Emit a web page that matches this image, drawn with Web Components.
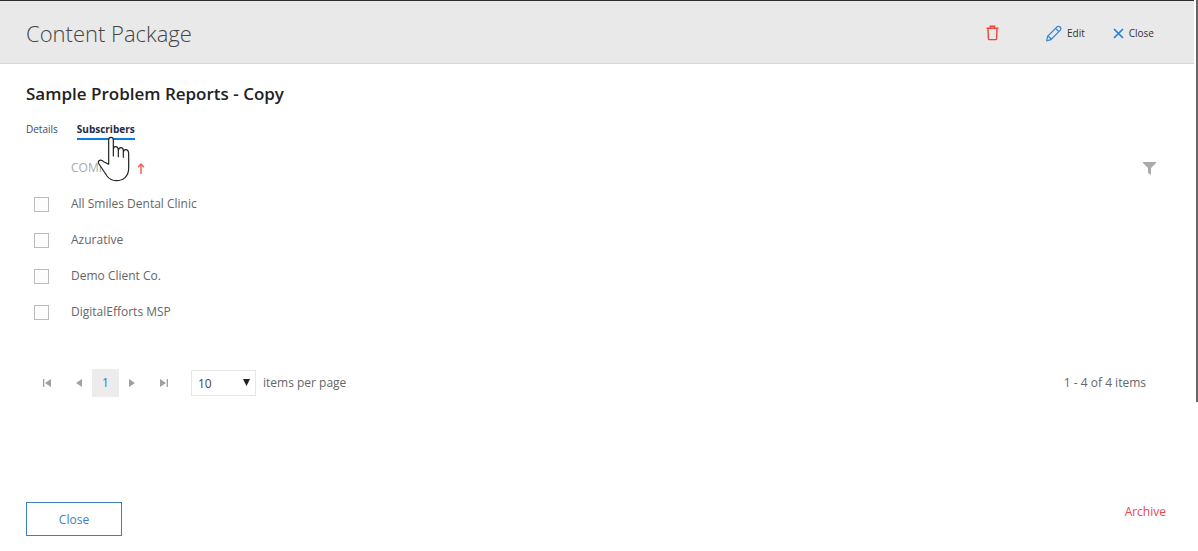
<!DOCTYPE html>
<html lang="en">
<head>
<meta charset="utf-8">
<title>Content Package</title>
<style>
body { margin: 0; background: #fff; color: #666; font: 12px/20px "Open Sans", "Noto Sans", sans-serif; }
</style>
</head>
<body>
<package-page></package-page>
<script>
function define(name, html, setup) {
  const template = document.createElement("template");
  template.innerHTML = html;
  customElements.define(name, class extends HTMLElement {
    constructor() {
      super();
      this.attachShadow({ mode: "open" }).append(template.content.cloneNode(true));
    }
    connectedCallback() { if (setup) setup(this, this.shadowRoot); }
  });
}

define("tool-button", `
<style>
:host { display: block; }
button { display: flex; align-items: center; gap: 5px; padding: 0; border: 0; background: none; color: #333; font: inherit; font-size: 10px; line-height: 20px; cursor: pointer; }
</style>
<button type="button"><slot name="icon"></slot><slot></slot></button>`,
(host, root) => {
  if (host.hasAttribute("label")) root.querySelector("button").setAttribute("aria-label", host.getAttribute("label"));
});

define("page-header", `
<style>
:host { display: block; border-top: 1px solid #2e2a2e; border-bottom: 1px solid #d6d6d6; background: #e9e9e9; margin-right: 2px; }
header { display: flex; align-items: center; height: 62px; padding: 2px 40px 0 26px; box-sizing: border-box; }
h1 { flex: 1; margin: 0; font-size: 22px; line-height: 32px; font-weight: 300; color: #444; }
nav { display: flex; align-items: center; }
.remove { margin-right: 47px; }
.edit { margin-right: 28px; }
svg { display: block; fill: none; }
</style>
<header>
  <h1>Content Package</h1>
  <nav aria-label="Package actions">
    <tool-button class="remove" label="Delete"><svg slot="icon" width="13" height="16" viewBox="0 0 13 16" stroke="#f0443c" stroke-width="1.4"><path d="M.5 3.3h12M4.3 3V1.2h4.4V3M2 3.500l.4 10.3q0 .8.8.8h6.600q.8 0 .8-.8L11 3.500"/></svg></tool-button>
    <tool-button class="edit"><svg slot="icon" width="16" height="17" viewBox="0 0 16 17" stroke="#3585d0" stroke-width="1.2"><path d="M.7 15.8l.9-4.500L11.2 1.8q1.4-1.1 2.9.2 1.500 1.600.2 3.1L4.9 14.600zM1.600 11.3q2.8.4 3.3 3.3M9.600 3.4l3.4 3.3"/></svg>Edit</tool-button>
    <tool-button><svg slot="icon" width="11" height="11" viewBox="0 0 11 11" stroke="#2880d5" stroke-width="1.7"><path d="M1 1l9 9M10 1l-9 9"/></svg>Close</tool-button>
  </nav>
</header>`);

define("tab-bar", `
<style>
:host { display: block; }
nav { display: flex; gap: 19px; position: relative; }
a { color: #3f4668; text-decoration: none; font-size: 10px; line-height: 20px; height: 19px; border-bottom: 2px solid transparent; }
a[aria-current] { color: #222b45; font-weight: 700; border-color: #0a7be0; }
.pointer { position: absolute; left: 70px; top: 16px; pointer-events: none; }
</style>
<nav>
  <a href="#details">Details</a>
  <a href="#subscribers" aria-current="page">Subscribers</a>
  <svg class="pointer" width="37" height="47" viewBox="285 75 111 141" fill="#fff" stroke="#222" stroke-width="3.6" stroke-linecap="round" stroke-linejoin="round" aria-hidden="true"><path d="M323 163V90q0-8 7-8t7 8v48V119q0-9 7-9t8 9v21-18q1-9 8-9t7 9v20-15q1-8 7-8 8 0 9 11v45q0 18-11 28-10 9-26 9-17 0-28-14L294 162q-5-8 2-11 6-2 12 4z"/></svg>
</nav>`);

define("subscriber-table", `
<style>
:host { display: block; }
table { width: 100%; border-collapse: collapse; table-layout: fixed; }
th, td { padding: 0; height: 36px; text-align: left; font-weight: 400; vertical-align: middle; }
.pick { width: 45px; }
.tools { width: 53px; }
th { color: #aaa; }
th svg, th button { display: block; }
.sort { display: flex; align-items: center; gap: 8px; }
button { border: 0; padding: 0; background: none; }
input { appearance: none; display: block; width: 15px; height: 15px; margin: 0 0 0 8px; border: 1px solid #bbb; background: #fdfdfd; }
</style>
<table>
  <thead><tr>
    <th class="pick"></th>
    <th scope="col" aria-sort="ascending"><span class="sort">COMPANY <svg width="8" height="11" viewBox="0 0 8 11" fill="none" stroke="#f4605c" stroke-width="1.5"><path d="M4 11V1M1 4.2L4 1l3 3.2"/></svg></span></th>
    <th class="tools"><button type="button" aria-label="Filter"><svg width="13" height="13" viewBox="0 0 13 13" fill="#aaa"><path d="M0 0h13v1L8 6v7l-3-2V6L0 1z"/></svg></button></th>
  </tr></thead>
  <tbody></tbody>
</table>`,
(host, root) => {
  const body = root.querySelector("tbody");
  body.replaceChildren();
  host.getAttribute("names").split("|").forEach((name, i) => {
    const row = body.insertRow();
    row.innerHTML = `<td><input type="checkbox" id="pick${i}"></td><td colspan="2"><label for="pick${i}"></label></td>`;
    row.querySelector("label").textContent = name;
  });
});

define("list-pager", `
<style>
:host { display: flex; align-items: center; height: 28px; padding-left: 8px; }
button { flex: none; width: 26px; height: 28px; padding: 0; border: 0; background: none; color: #aaa; font: inherit; display: grid; place-items: center; }
.gap { margin-right: 6px; }
.current { width: 27px; background: #ececec; color: #2b78c2; }
.picker { position: relative; margin: 0 7px 0 14px; }
select { display: block; appearance: none; width: 65px; height: 26px; padding: 2px 6px 0; border: 1px solid #e6e6e6; border-radius: 0; background: #fff; color: #444; font: inherit; }
.picker svg { position: absolute; right: 6px; top: 9px; pointer-events: none; }
output { margin-left: auto; margin-right: 50px; }
</style>
<button type="button" class="gap" aria-label="First page"><svg width="8" height="8" viewBox="0 0 8 8" fill="#a0a0a0"><path d="M0 0h1.3v8H0zM8 0v8L2 4z"/></svg></button>
<button type="button" aria-label="Previous page"><svg width="6" height="8" viewBox="0 0 6 8" fill="#a0a0a0"><path d="M6 0v8L0 4z"/></svg></button>
<button type="button" class="current" aria-current="page">1</button>
<button type="button" class="gap" aria-label="Next page"><svg width="6" height="8" viewBox="0 0 6 8" fill="#a0a0a0"><path d="M0 0v8l6-4z"/></svg></button>
<button type="button" aria-label="Last page"><svg width="8" height="8" viewBox="0 0 8 8" fill="#a0a0a0"><path d="M6.700 0H8v8H6.700zM0 0v8l6-4z"/></svg></button>
<span class="picker"><select id="size"><option>10</option><option>20</option><option>50</option></select><svg width="7" height="7" viewBox="0 0 7 7" fill="#222"><path d="M0 0h7L3.500 7z"/></svg></span>
<label for="size">items per page</label>
<output>1 - 4 of 4 items</output>`);

define("page-footer", `
<style>
:host { display: flex; justify-content: space-between; align-items: center; padding: 0 32px 0 26px; }
button { font: inherit; background: none; }
.close { width: 96px; height: 34px; padding: 2px 0 0; border: 1px solid #3c7fc0; background: #fff; color: #3c7fc0; }
.archive { padding: 0 0 14px; border: 0; color: #e5484d; }
</style>
<button type="button" class="close">Close</button>
<button type="button" class="archive">Archive</button>`);

define("package-page", `
<style>
:host { display: block; }
.panel { border-right: 2px solid #666; padding-bottom: 5px; }
main { padding: 16px 0 0 26px; }
h2 { margin: 0; font-size: 17px; line-height: 28px; font-weight: 600; color: #222; }
tab-bar { margin-top: 11px; }
subscriber-table { margin-top: 10px; }
list-pager { margin-top: 39px; }
page-footer { margin-top: 100px; }
</style>
<div class="panel">
  <page-header></page-header>
  <main>
    <h2>Sample Problem Reports - Copy</h2>
    <tab-bar></tab-bar>
    <subscriber-table names="All Smiles Dental Clinic|Azurative|Demo Client Co.|DigitalEfforts MSP"></subscriber-table>
    <list-pager></list-pager>
  </main>
</div>
<page-footer></page-footer>`);
</script>
</body>
</html>
